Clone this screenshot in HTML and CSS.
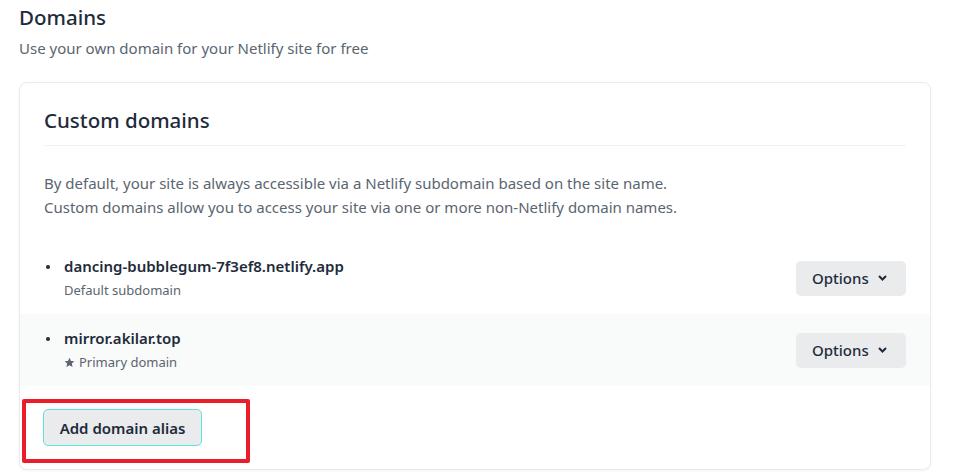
FILE: index.html
```html
<!DOCTYPE html>
<html>
<head>
<meta charset="utf-8">
<link rel="stylesheet" href="styles.css">
</head>
<body>
<div class="page">
  <h1 class="title">Domains</h1>
  <p class="subtitle">Use your own domain for your Netlify site for free</p>
  <section class="card">
    <h2 class="card-title">Custom domains</h2>
    <div class="desc">
      <p>By default, your site is always accessible via a Netlify subdomain based on the site name.</p>
      <p>Custom domains allow you to access your site via one or more non-Netlify domain names.</p>
    </div>
    <ul class="domains">
      <li class="domain">
        <div class="domain-info">
          <span class="bullet"></span>
          <div>
            <div class="domain-name">dancing-bubblegum-7f3ef8.netlify.app</div>
            <div class="domain-note">Default subdomain</div>
          </div>
        </div>
        <button class="options">Options <svg width="9" height="6" viewBox="0 0 9 6"><path d="M1 1l3.5 3.5L8 1" fill="none" stroke="#1e2b3a" stroke-width="2"/></svg></button>
      </li>
      <li class="domain alt">
        <div class="domain-info">
          <span class="bullet"></span>
          <div>
            <div class="domain-name">mirror.akilar.top</div>
            <div class="domain-note"><svg class="star" width="11" height="11" viewBox="0 0 24 24"><path d="M12 1.5l3.2 7 7.6.8-5.7 5.1 1.6 7.5L12 18l-6.7 3.9 1.6-7.5L1.2 9.3l7.6-.8z" fill="#5a6570"/></svg>Primary domain</div>
          </div>
        </div>
        <button class="options">Options <svg width="9" height="6" viewBox="0 0 9 6"><path d="M1 1l3.5 3.5L8 1" fill="none" stroke="#1e2b3a" stroke-width="2"/></svg></button>
      </li>
    </ul>
    <div class="actions">
      <button class="add">Add domain alias</button>
      <div class="highlight"></div>
    </div>
  </section>
</div>
</body>
</html>
```
FILE: styles.css
```css
* { box-sizing: border-box; }
html, body { margin: 0; padding: 0; background: #fff; }
body {
  font-family: "Noto Sans", "Open Sans", sans-serif;
  color: #1e2b3a;
  width: 959px;
  height: 474px;
  overflow: hidden;
}
.page { padding: 3px 28px 0 19px; }
.title {
  margin: 0;
  font-size: 20.5px;
  font-weight: 500;
  line-height: 28px;
  color: #1e2b3a;
}
.subtitle {
  margin: 2px 0 0;
  font-size: 15px;
  line-height: 30px;
  color: #5a6570;
}
.card {
  margin-top: 19px;
  width: 912px;
  background: #fff;
  border: 1px solid #ebebeb;
  border-radius: 8px;
  box-shadow: 0 1px 3px rgba(0,0,0,0.05);
  padding: 0 0 23px;
}
.card-title {
  margin: 0 24px;
  padding: 23px 0 11px;
  font-size: 20.5px;
  font-weight: 500;
  line-height: 28px;
  border-bottom: 1px solid #f1f2f3;
}
.desc { padding: 25px 24px 23px; }
.desc p {
  margin: 0;
  font-size: 15px;
  line-height: 24px;
  color: #5a6570;
}
.domains { list-style: none; margin: 0; padding: 0; }
.domain {
  display: flex;
  align-items: center;
  justify-content: space-between;
  padding: 0 24px;
  height: 72px;
}
.domain.alt { background: #f9fafa; }
.domain-info { display: flex; align-items: flex-start; }
.bullet {
  width: 4px;
  height: 4px;
  margin: 11px 14px 0 2px;
  border-radius: 50%;
  background: #1e2b3a;
}
.domain-name {
  font-size: 15px;
  font-weight: 600;
  line-height: 24px;
  color: #1e2b3a;
}
.domain-note {
  display: flex;
  align-items: center;
  gap: 4px;
  font-size: 13px;
  line-height: 24px;
  color: #5a6570;
}
.options {
  display: flex;
  align-items: center;
  gap: 9px;
  height: 35px;
  width: 110px;
  padding: 0 16px;
  border: none;
  border-radius: 5px;
  background: #e9ebed;
  font-family: inherit;
  font-size: 15px;
  font-weight: 500;
  color: #1e2b3a;
}
.actions {
  position: relative;
  padding: 23px 24px 0 23px;
}
.add {
  height: 37px;
  width: 159px;
  border: 1px solid #5ee3e3;
  border-radius: 5px;
  background: #e9ebed;
  font-family: inherit;
  font-size: 15px;
  font-weight: 600;
  color: #1e2b3a;
  padding: 0;
}
.highlight {
  position: absolute;
  left: 2px;
  top: 13px;
  width: 228px;
  height: 64px;
  border: 4px solid #ea1d2b;
  border-radius: 2px;
}
```
